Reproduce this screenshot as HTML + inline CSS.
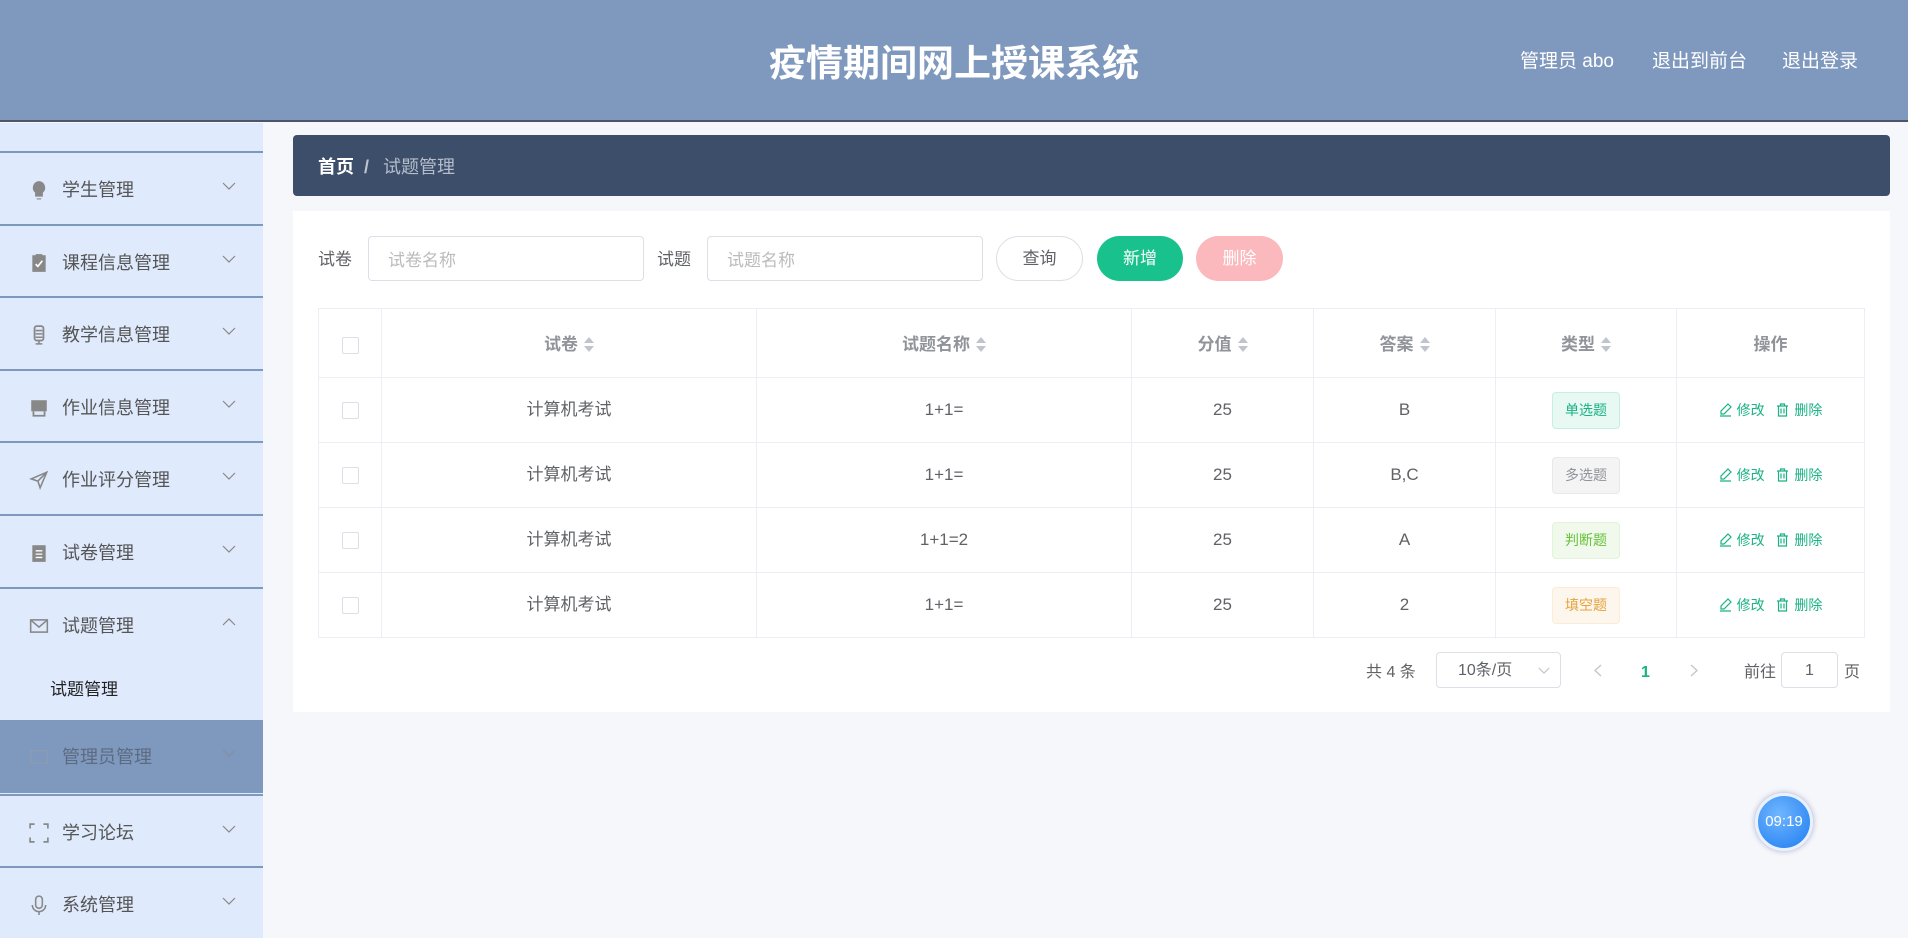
<!DOCTYPE html>
<html><head><meta charset="utf-8"><style>
*{box-sizing:border-box;margin:0;padding:0}
body{width:1908px;height:938px;overflow:hidden;background:#f5f7fa;font-family:"Liberation Sans","Noto Sans CJK SC",sans-serif;position:relative;color:#606266;line-height:1.2}
.a{position:absolute}
#hd{left:0;top:0;width:1908px;height:122px;background:#7f98bd;border-bottom:2px solid #4d5566}
#hd .t{left:0;width:1908px;top:42px;text-align:center;font-size:37px;font-weight:bold;color:#fff}
#hd .r{top:51px;font-size:19px;color:#fff}
#sb{left:0;top:123px;width:263px;height:815px;background:#dfeafc;overflow:hidden}
.it{position:absolute;left:0;width:263px;height:73px;border-top:2px solid #7f98bd;font-size:18px;color:#555}
.it .ic{position:absolute;left:29px;top:27px;width:20px;height:20px}
.it .tx{position:absolute;left:62px;top:27px}
.it .ch{position:absolute;left:222px;top:29px;width:14px;height:8px}
#bc{left:293px;top:135px;width:1597px;height:61px;background:#3d4e6a;border-radius:4px;font-size:18px;color:#fff}
#pn{left:293px;top:211px;width:1597px;height:501px;background:#fff}
.inp{position:absolute;height:45px;border:1px solid #dcdfe6;border-radius:4px;font-size:17px;color:#bbb;padding:14px 19px;background:#fff}
.btn{position:absolute;top:236px;height:45px;border-radius:23px;font-size:17px;text-align:center;line-height:46px}
table{position:absolute;left:318px;top:308px;width:1547px;border-collapse:collapse;font-size:17px}
td,th{border:1px solid #ebeef5;text-align:center;color:#606266;vertical-align:middle;line-height:20px}
th{height:69px;color:#909399;font-weight:bold;padding-top:3px}
td{height:65px}
.cb{display:inline-block;width:17px;height:17px;border:1px solid #dcdfe6;border-radius:2px;background:#fff;vertical-align:middle}
.so{display:inline-block;width:10px;height:16px;vertical-align:middle;margin-left:6px;position:relative}
.so:before{content:"";position:absolute;left:0;top:0;border:5px solid transparent;border-bottom:6px solid #c0c4cc;border-top:0}
.so:after{content:"";position:absolute;left:0;top:9px;border:5px solid transparent;border-top:6px solid #c0c4cc;border-bottom:0}
.tag{display:inline-block;padding:0 12px;height:37px;line-height:35px;border-radius:4px;font-size:14px;border:1px solid}
.op{color:#19b283;font-size:14px;white-space:nowrap}
.op svg{width:13px;height:14px;vertical-align:-2px;margin-right:5px}
.pg{position:absolute;top:664px;font-size:16px;line-height:18px}
</style></head><body>
<svg width="0" height="0" style="position:absolute"><defs>
<symbol id="cv" viewBox="0 0 14 8"><path d="M1 1l6 6 6-6" fill="none" stroke="#888" stroke-width="1.2"/></symbol>
<symbol id="ed" viewBox="0 0 13 14"><path d="M9 1l3 3-7 7H2V8z M1 13h11" fill="none" stroke="#19b283" stroke-width="1.2"/></symbol>
<symbol id="dl" viewBox="0 0 13 14"><path d="M1 3h11M4.5 3V1h4v2M2.5 3v10h8V3M5 5.5v5M8 5.5v5" fill="none" stroke="#19b283" stroke-width="1.2"/></symbol>
</defs></svg>
<div id="hd" class="a"><div class="a t">疫情期间网上授课系统</div>
<div class="a r" style="left:1520px">管理员 abo</div><div class="a r" style="left:1652px">退出到前台</div><div class="a r" style="left:1782px">退出登录</div></div>
<div id="sb" class="a">
<div class="it" style="top:-45px;border-top:0"><span class="tx">教师管理</span></div>
<div class="it" style="top:28px"><svg class="ic" viewBox="0 0 18 18"><path d="M9 1a6 6 0 0 0-3.5 10.5V15h7v-3.5A6 6 0 0 0 9 1z" fill="#888"/><path d="M7 17h4" stroke="#888"/></svg><span class="tx">学生管理</span><svg class="ch"><use href="#cv"/></svg></div>
<div class="it" style="top:101px"><svg class="ic" viewBox="0 0 18 18"><rect x="3" y="2" width="12" height="15" fill="#888"/><rect x="6" y="1" width="6" height="3" fill="#888"/><path d="M6 10l2 2 4-5" stroke="#fff" stroke-width="1.5" fill="none"/></svg><span class="tx">课程信息管理</span><svg class="ch"><use href="#cv"/></svg></div>
<div class="it" style="top:173px"><svg class="ic" viewBox="0 0 18 18"><rect x="5" y="1" width="8" height="13" rx="2" fill="none" stroke="#888" stroke-width="1.6"/><path d="M9 14v3M6 17h6M6 5h6M6 8h6M6 11h6" stroke="#888" stroke-width="1.4"/></svg><span class="tx">教学信息管理</span><svg class="ch"><use href="#cv"/></svg></div>
<div class="it" style="top:246px"><svg class="ic" viewBox="0 0 18 18"><path d="M2 2h14v10H2z" fill="#888"/><path d="M4 12v4h10v-4" fill="none" stroke="#888" stroke-width="1.6"/></svg><span class="tx">作业信息管理</span><svg class="ch"><use href="#cv"/></svg></div>
<div class="it" style="top:318px"><svg class="ic" viewBox="0 0 18 18"><path d="M16 2L2 8l6 2 2 6z M8 10l8-8" fill="none" stroke="#888" stroke-width="1.4"/></svg><span class="tx">作业评分管理</span><svg class="ch"><use href="#cv"/></svg></div>
<div class="it" style="top:391px"><svg class="ic" viewBox="0 0 18 18"><rect x="3" y="2" width="12" height="15" fill="#888"/><path d="M6 7h6M6 10h6M6 13h6" stroke="#fff" stroke-width="1.2"/></svg><span class="tx">试卷管理</span><svg class="ch"><use href="#cv"/></svg></div>
<div class="it" style="top:464px;height:134px"><svg class="ic" viewBox="0 0 18 18"><rect x="1.5" y="3.5" width="15" height="11" fill="none" stroke="#888" stroke-width="1.4"/><path d="M2 4l7 6 7-6" fill="none" stroke="#888" stroke-width="1.4"/></svg><span class="tx">试题管理</span><svg class="ch" style="transform:rotate(180deg)"><use href="#cv"/></svg>
<span class="a" style="left:50px;top:91px;color:#222;font-size:17px">试题管理</span></div>
<div class="it" style="top:597px;background:#7f98bd;border-top:0;color:#5c6b82"><svg class="ic" viewBox="0 0 18 18"><rect x="1.5" y="3.5" width="15" height="11" fill="none" stroke="#8a9cb5" stroke-width="1.4"/></svg><span class="tx">管理员管理</span><svg class="ch" style="opacity:.5"><use href="#cv"/></svg></div>
<div class="it" style="top:671px;border-top:2px solid #7f98bd"><svg class="ic" viewBox="0 0 18 18"><path d="M1 5V1h4M13 1h4v4M17 13v4h-4M5 17H1v-4" fill="none" stroke="#888" stroke-width="1.5"/></svg><span class="tx">学习论坛</span><svg class="ch"><use href="#cv"/></svg></div>
<div class="it" style="top:743px"><svg class="ic" viewBox="0 0 18 18"><rect x="6" y="1" width="6" height="11" rx="3" fill="none" stroke="#888" stroke-width="1.4"/><path d="M3 9a6 6 0 0 0 12 0M9 15v3" fill="none" stroke="#888" stroke-width="1.4"/></svg><span class="tx">系统管理</span><svg class="ch"><use href="#cv"/></svg></div>
</div>
<div id="bc" class="a"><span class="a" style="left:25px;top:22px;font-weight:bold">首页</span><span class="a" style="left:71px;top:22px;color:#c0c4cc;font-weight:bold">/</span><span class="a" style="left:90px;top:22px;color:#b5bdcb">试题管理</span></div>
<div id="pn" class="a"></div>
<span class="a" style="left:318px;top:250px;font-size:17px">试卷</span>
<div class="inp" style="left:368px;top:236px;width:276px">试卷名称</div>
<span class="a" style="left:657px;top:250px;font-size:17px">试题</span>
<div class="inp" style="left:707px;top:236px;width:276px">试题名称</div>
<div class="btn" style="left:996px;width:87px;border:1px solid #dcdfe6;color:#606266;line-height:44px">查询</div>
<div class="btn" style="left:1097px;width:86px;background:#19c28c;color:#fff">新增</div>
<div class="btn" style="left:1196px;width:87px;background:#fbb8bd;color:#fff">删除</div>
<table>
<tr><th style="width:63px"><span class="cb"></span></th><th style="width:375px">试卷<span class="so"></span></th><th style="width:375px">试题名称<span class="so"></span></th><th style="width:182px">分值<span class="so"></span></th><th style="width:182px">答案<span class="so"></span></th><th style="width:181px">类型<span class="so"></span></th><th>操作</th></tr>
<tr><td><span class="cb"></span></td><td>计算机考试</td><td>1+1=</td><td>25</td><td>B</td><td><span class="tag" style="background:#e8f9f3;border-color:#c5f0e1;color:#19b283">单选题</span></td><td class="op"><svg><use href="#ed"/></svg>修改 &nbsp; <svg><use href="#dl"/></svg>删除</td></tr>
<tr><td><span class="cb"></span></td><td>计算机考试</td><td>1+1=</td><td>25</td><td>B,C</td><td><span class="tag" style="background:#f4f4f5;border-color:#e9e9eb;color:#909399">多选题</span></td><td class="op"><svg><use href="#ed"/></svg>修改 &nbsp; <svg><use href="#dl"/></svg>删除</td></tr>
<tr><td><span class="cb"></span></td><td>计算机考试</td><td>1+1=2</td><td>25</td><td>A</td><td><span class="tag" style="background:#f0f9eb;border-color:#e1f3d8;color:#67c23a">判断题</span></td><td class="op"><svg><use href="#ed"/></svg>修改 &nbsp; <svg><use href="#dl"/></svg>删除</td></tr>
<tr><td><span class="cb"></span></td><td>计算机考试</td><td>1+1=</td><td>25</td><td>2</td><td><span class="tag" style="background:#fdf6ec;border-color:#faecd8;color:#e6a23c">填空题</span></td><td class="op"><svg><use href="#ed"/></svg>修改 &nbsp; <svg><use href="#dl"/></svg>删除</td></tr>
</table>
<span class="pg" style="left:1366px">共 4 条</span>
<div class="inp" style="left:1436px;top:652px;width:125px;height:36px;padding:9px 21px;color:#606266;font-size:16px;line-height:18px">10条/页<svg class="a" style="right:10px;top:14px;width:12px;height:7px" viewBox="0 0 14 8"><path d="M1 1l6 6 6-6" fill="none" stroke="#c0c4cc" stroke-width="1.3"/></svg></div>
<svg class="a" style="left:1594px;top:664px;width:8px;height:13px" viewBox="0 0 8 13"><path d="M7 1L1 6.5 7 12" fill="none" stroke="#c0c4cc" stroke-width="1.3"/></svg>
<span class="pg" style="left:1641px;color:#19b283;font-weight:bold">1</span>
<svg class="a" style="left:1690px;top:664px;width:8px;height:13px" viewBox="0 0 8 13"><path d="M1 1l6 5.5L1 12" fill="none" stroke="#c0c4cc" stroke-width="1.3"/></svg>
<span class="pg" style="left:1744px">前往</span>
<div class="inp" style="left:1781px;top:652px;width:57px;height:36px;padding:9px 0;text-align:center;color:#606266;font-size:16px;line-height:18px">1</div>
<span class="pg" style="left:1844px">页</span>
<div class="a" style="left:1755px;top:793px;width:58px;height:58px;border-radius:50%;background:radial-gradient(circle at 40% 35%,#6fb6ff,#1e7cf0);border:3px solid #e8f1ff;box-shadow:0 0 6px #aac;color:#fff;font-size:15px;text-align:center;line-height:52px">09:19</div>
</body></html>
